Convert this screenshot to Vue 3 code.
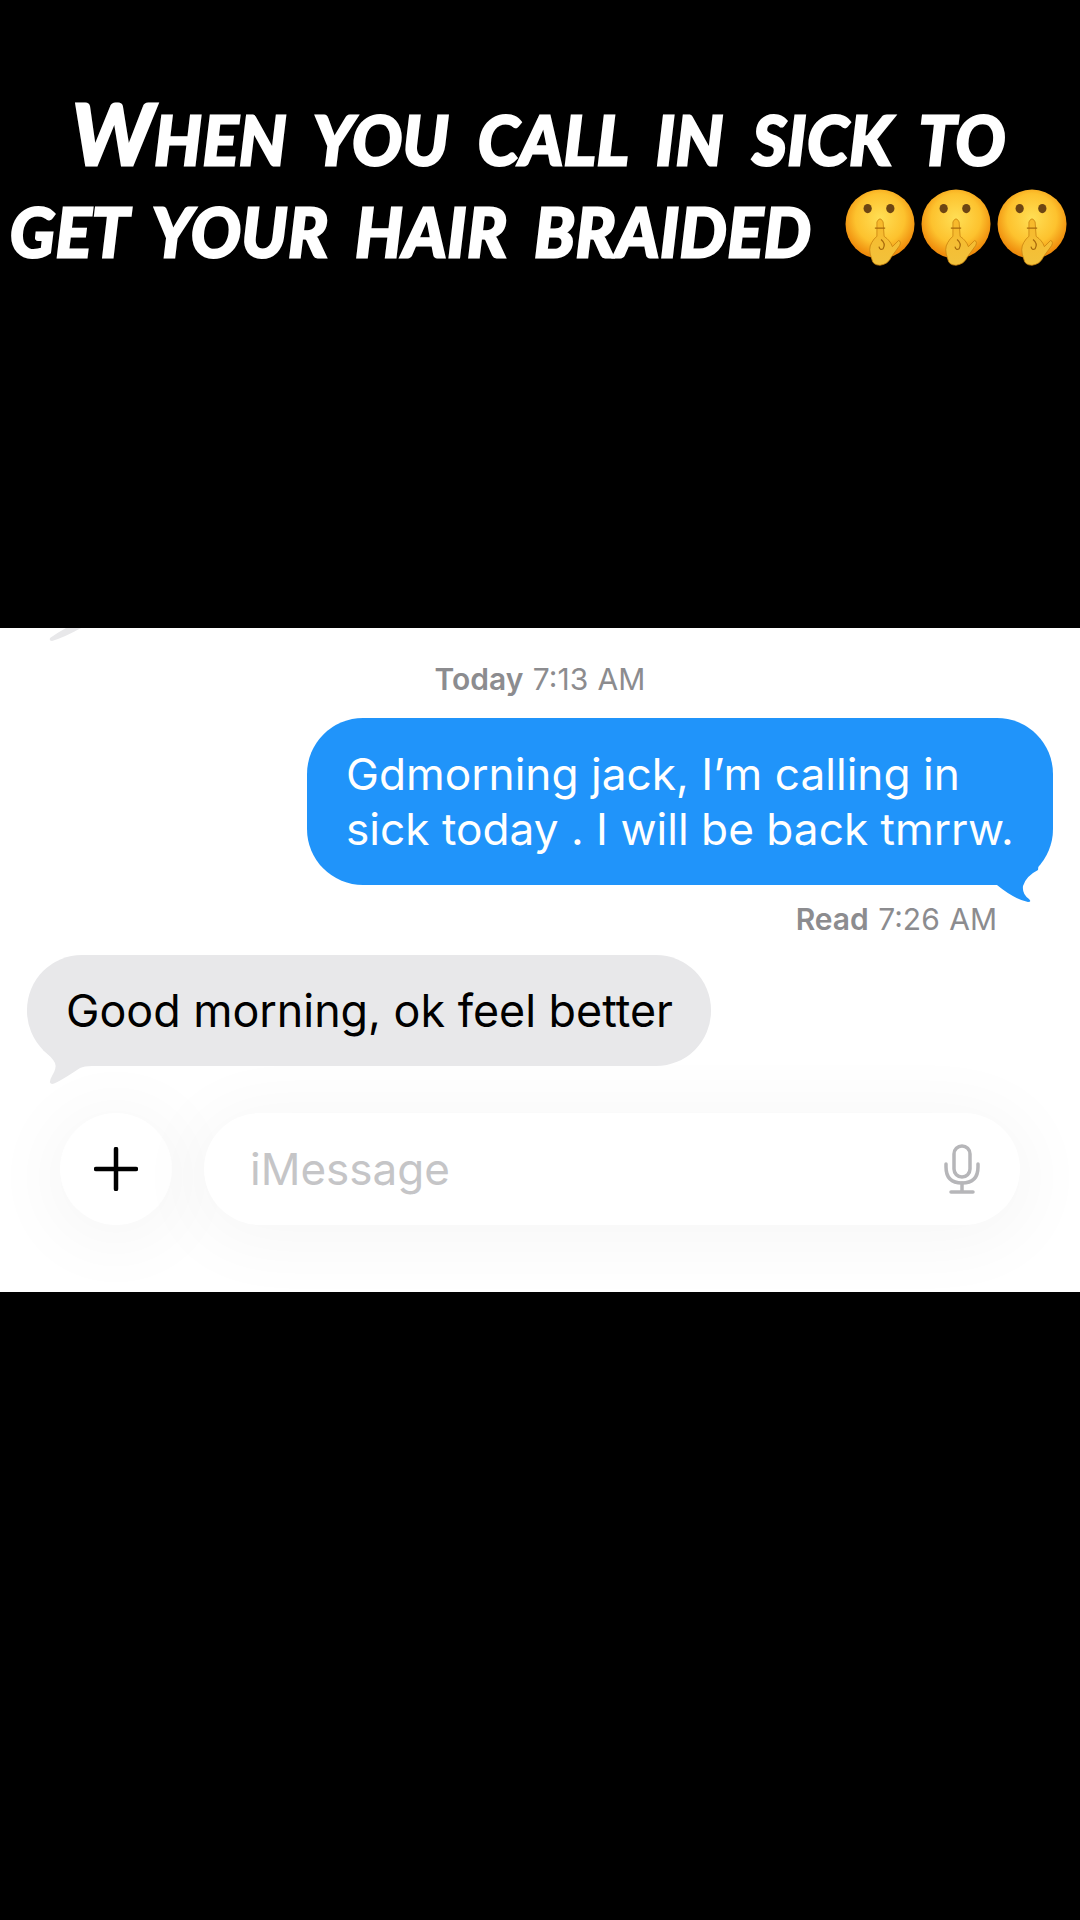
<script setup>
const shushes = [0, 76, 152];
</script>

<template>
  <div class="page">
    <header class="caption">
      <div class="line first"><span class="big">W</span>hen you call in sick to</div>
      <div class="line second">
        <span class="words">get your hair braided</span>
        <svg class="emojis" width="224" height="78" viewBox="0 0 224 78">
          <defs>
            <radialGradient id="face" cx="50%" cy="42%" r="55%">
              <stop offset="0" stop-color="#ffdf55" />
              <stop offset="0.65" stop-color="#fdc22e" />
              <stop offset="1" stop-color="#ef8c0c" />
            </radialGradient>
            <linearGradient id="hand" x1="0" y1="0" x2="0" y2="1">
              <stop offset="0" stop-color="#f8b92a" />
              <stop offset="1" stop-color="#f2c23c" />
            </linearGradient>
          </defs>
          <g v-for="x in shushes" :key="x" :transform="`translate(${x} 0) scale(1.03)`">
            <circle cx="34" cy="34" r="33.5" fill="url(#face)" />
            <ellipse cx="22" cy="19" rx="4" ry="4.5" fill="#6d4513" />
            <ellipse cx="44" cy="19" rx="4" ry="4.5" fill="#6d4513" />
            <path d="M31 32 Q34 26 37 32 L38 46 Q44 50 46 56 L52 50 Q55 51 53 55 L45 66 Q42 73 34 74 Q27 74 26 68 Q22 58 26 52 Q28 48 31 46 Z" fill="url(#hand)" stroke="#c9820f" stroke-width="0.8" />
            <path d="M29 38 H39 M35 49 Q40 53 37 58 Q34 60 33 56" fill="none" stroke="#a86a0c" stroke-width="1.2" />
          </g>
        </svg>
      </div>
    </header>

    <main class="thread">
      <svg class="cut-tail" width="34" height="16" viewBox="0 0 34 16">
        <path d="M32 0 Q16 9 3 13 Q0 13 1 10 Q8 5 17 0 Z" fill="#e8e8ea" />
      </svg>

      <div class="stamp center"><b>Today</b> 7:13 AM</div>

      <div class="row right">
        <div class="bubble sent">
          Gdmorning jack, I’m calling in<br />sick today . I will be back tmrrw.
          <svg class="tail tail-sent" width="64" height="56" viewBox="0 0 64 56">
            <path d="M10 0 H60 L58 20 Q46 26 43 36 Q42 44 49 49 Q52 52 48 52 Q34 49 17 35 L10 35 Z" fill="#2094fa" />
          </svg>
        </div>
      </div>

      <div class="stamp read"><b>Read</b> 7:26 AM</div>

      <div class="row">
        <div class="bubble received">
          Good morning, ok feel better
          <svg class="tail tail-received" width="70" height="50" viewBox="0 0 70 50">
            <path d="M20 0 L13 10 Q22 17 25 23 Q27 28 22 36 Q18 43 22 44 Q26 44 50 28 Q54 26 62 26 L70 20 V0 Z" fill="#e8e8ea" />
          </svg>
        </div>
      </div>

      <div class="composer">
        <div class="plus">
          <svg width="44" height="44" viewBox="0 0 44 44">
            <path d="M22 2 V42 M2 22 H42" stroke="#000" stroke-width="4.5" stroke-linecap="round" />
          </svg>
        </div>
        <div class="field">
          <span class="placeholder">iMessage</span>
          <svg class="mic" width="36" height="50" viewBox="0 0 36 50">
            <rect x="10" y="2" width="16" height="31" rx="8" fill="none" stroke="#b6b6b9" stroke-width="3.5" />
            <path d="M2 20 V23 Q2 39 18 39 Q34 39 34 23 V20" fill="none" stroke="#b6b6b9" stroke-width="3.5" stroke-linecap="round" />
            <path d="M18 39 V47 M7 48 H29" stroke="#b6b6b9" stroke-width="3.5" stroke-linecap="round" />
          </svg>
        </div>
      </div>
    </main>
  </div>
</template>

<style>
html,
body {
  margin: 0;
  background: #000;
}
</style>

<style scoped>
.page {
  width: 1080px;
  height: 1920px;
  background: #000;
  overflow: hidden;
  display: flex;
  flex-direction: column;
}

.caption {
  height: 628px;
  box-sizing: border-box;
  padding-top: 92px;
  color: #fff;
  font-family: Lato, "Liberation Sans", sans-serif;
  font-style: italic;
  font-weight: 700;
  text-transform: uppercase;
  font-size: 66px;
  letter-spacing: 1px;
  -webkit-text-stroke: 3px #fff;
}

.line {
  height: 92px;
  line-height: 95px;
  white-space: nowrap;
}

.big {
  font-size: 84px;
  line-height: 0;
}

.first {
  padding-left: 72px;
  word-spacing: 13px;
}

.second {
  display: flex;
  align-items: center;
  padding-left: 10px;
  word-spacing: 11px;
}

.words {
  align-self: flex-start;
  width: 835px;
  flex: none;
}

.emojis {
  flex: none;
  margin-top: -5px;
}

.thread {
  position: relative;
  height: 664px;
  box-sizing: border-box;
  padding: 32px 27px 0;
  background: #fff;
  display: flex;
  flex-direction: column;
  font-family: Inter, "Liberation Sans", sans-serif;
}

.cut-tail {
  position: absolute;
  top: 0;
  left: 49px;
}

.stamp {
  font-size: 30px;
  line-height: 38px;
  color: #8c8c8f;
  word-spacing: 1px;
}

.stamp b {
  font-weight: 600;
}

.center {
  text-align: center;
  margin-bottom: 20px;
}

.read {
  text-align: right;
  padding-right: 56px;
  margin-top: 15px;
  margin-bottom: 17px;
}

.row {
  display: flex;
}

.right {
  justify-content: flex-end;
}

.bubble {
  position: relative;
  line-height: 55px;
  white-space: nowrap;
}

.sent {
  box-sizing: border-box;
  width: 746px;
  height: 167px;
  padding: 29px 0 0 39px;
  border-radius: 56px;
  background: #2094fa;
  color: #fff;
  font-size: 44.2px;
}

.received {
  box-sizing: border-box;
  width: 684px;
  height: 111px;
  padding: 29px 0 0 39px;
  border-radius: 55px;
  background: #e8e8ea;
  color: #000;
  font-size: 44.8px;
}

.tail {
  position: absolute;
}

.tail-sent {
  right: 9px;
  top: 132px;
}

.tail-received {
  left: 3px;
  top: 85px;
}

.composer {
  margin-top: 47px;
  margin-left: 33px;
  width: 960px;
  display: flex;
  gap: 32px;
}

.plus {
  width: 112px;
  height: 112px;
  flex: none;
  border-radius: 50%;
  background: #fff;
  box-shadow: 0 8px 70px 14px rgba(0, 0, 0, 0.035);
  display: flex;
  align-items: center;
  justify-content: center;
}

.field {
  flex: 1;
  height: 112px;
  box-sizing: border-box;
  padding: 0 40px 0 46px;
  border-radius: 56px;
  background: #fff;
  box-shadow: 0 8px 70px 14px rgba(0, 0, 0, 0.035);
  display: flex;
  align-items: center;
  justify-content: space-between;
}

.placeholder {
  font-size: 44px;
  color: #c5c5c7;
}

.mic {
  flex: none;
}
</style>
